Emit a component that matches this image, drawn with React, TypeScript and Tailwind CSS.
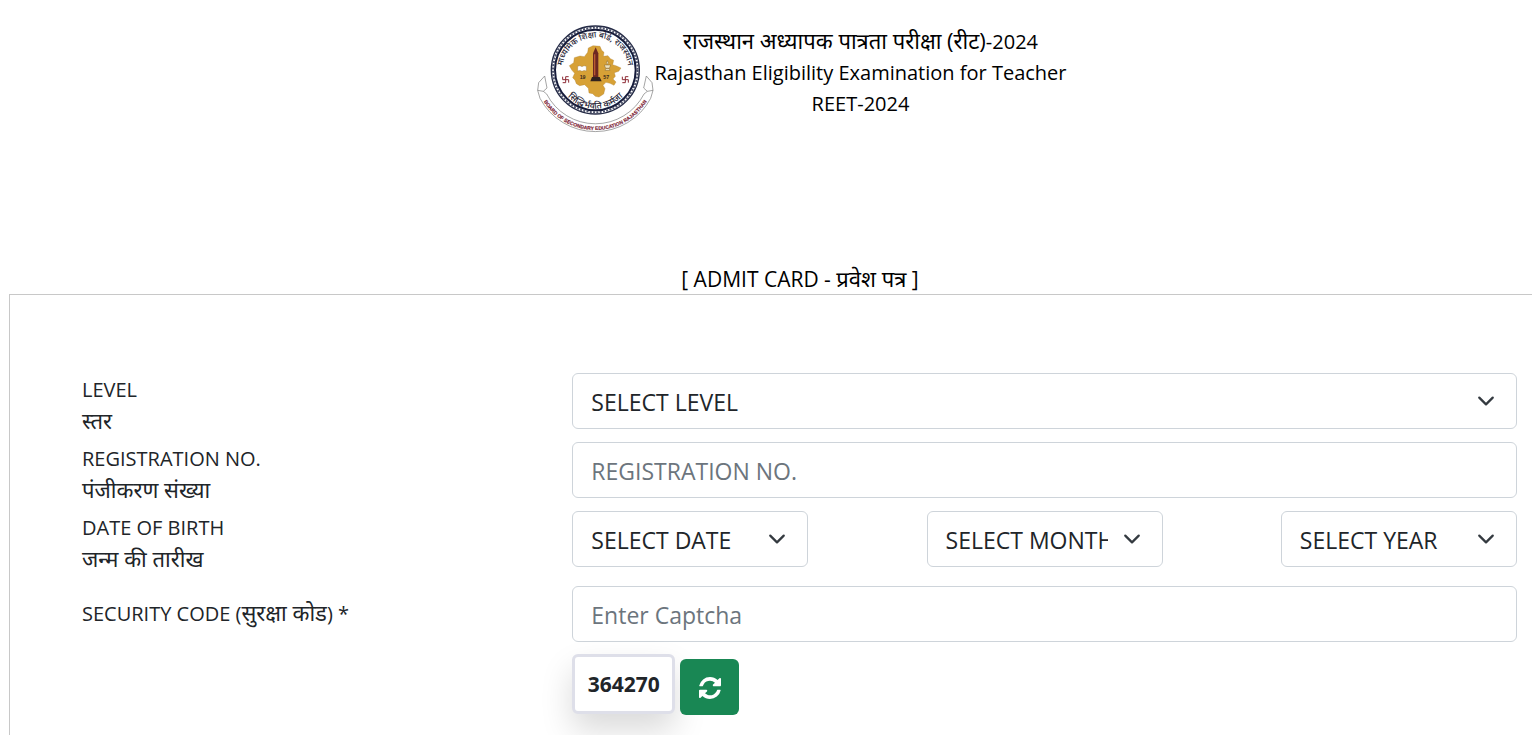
import { useState } from "react";
import type { ReactNode } from "react";

const fieldClass =
  "block h-14 w-full rounded-md border border-[#ced4da] bg-white pt-[2px] pl-[18px] text-[23px] text-[#212529] outline-none placeholder:text-[#6c757d] focus:border-[#86b7fe]";

const months = ["JANUARY", "FEBRUARY", "MARCH", "APRIL", "MAY", "JUNE", "JULY", "AUGUST", "SEPTEMBER", "OCTOBER", "NOVEMBER", "DECEMBER"];
const days = Array.from({ length: 31 }, (_, i) => String(i + 1));
const years = Array.from({ length: 50 }, (_, i) => String(2006 - i));

function Swastik({ x, y }: { x: number; y: number }) {
  return (
    <path
      transform={`translate(${x} ${y})`}
      d="M0-9V9M-9 0H9M0-9H9M9 0V9M0 9H-9M-9 0V-9"
      fill="none"
      stroke="#8e2b35"
      strokeWidth="3"
    />
  );
}

function BoardLogo() {
  return (
    <svg viewBox="12 15 351 327" className="h-[109px] w-[117px] shrink-0" role="img" aria-label="Board of Secondary Education Rajasthan">
      <defs>
        <path id="arc-top" d="M91 176A99 99 0 1 1 283 176" />
        <path id="arc-bottom" d="M78 180A112 112 0 0 0 296 180" />
        <path id="arc-ribbon" d="M31 242A182 182 0 0 0 343 242" />
      </defs>

      {/* ribbon */}
      <g fill="#fff" stroke="#777" strokeWidth="2">
        <path d="M35 168L17 188L14 211L21 235A188 188 0 0 0 353 235L360 211L357 188L340 168L332 204L343 214L333 222A164 164 0 0 1 41 222L31 214L42 204Z" />
        <path d="M14 211L31 214M360 211L343 214" fill="none" />
      </g>
      <text fontSize="15" fontWeight="700" fill="#7d2638" stroke="#7d2638" strokeWidth="0.5" textAnchor="middle" className="font-['Liberation_Sans',sans-serif]">
        <textPath href="#arc-ribbon" startOffset="50%">BOARD OF SECONDARY EDUCATION RAJASTHAN</textPath>
      </text>

      {/* rings */}
      <circle cx="187" cy="150" r="132" fill="#fff" stroke="#252b46" strokeWidth="4" />
      <circle cx="187" cy="150" r="127" fill="none" stroke="#4d536b" strokeWidth="6" strokeDasharray="6 4" />
      <circle cx="187" cy="150" r="121" fill="#fff" stroke="#161c3b" strokeWidth="6" />
      <g fill="#1d2133" fontWeight="500" textAnchor="middle" className="font-['Noto_Sans','Noto_Sans_Devanagari',sans-serif]">
        <text fontSize="25">
          <textPath href="#arc-top" startOffset="50%">माध्यमिक शिक्षा बोर्ड, राजस्थान</textPath>
        </text>
        <text fontSize="27">
          <textPath href="#arc-bottom" startOffset="50%">सिद्धिर्भवति कर्मजा</textPath>
        </text>
      </g>
      <Swastik x={98} y={179} />
      <Swastik x={277} y={179} />

      {/* state map */}
      <path
        d="M109 137L122 128L124 113L141 108L154 110L164 97L166 84L180 77L201 79L206 91L213 97L211 109L225 107L232 116L242 121L239 134L251 138L264 144L257 154L244 158L247 169L240 177L249 186L243 196L231 190L219 187L210 196L216 206L212 222L198 231L187 229L179 221L168 219L166 205L155 194L140 197L130 191L126 180L119 173L125 160L117 151Z"
        fill="#d7a136"
        stroke="#a87a2c"
        strokeWidth="1"
      />
      <path d="M180 100L188 82L196 100V172H180Z" fill="#6d2822" />
      <path d="M185 103V166" stroke="#b95b31" strokeWidth="4" />
      <path d="M177 171H200L206 184H172Z" fill="#30221f" />
      <path d="M134 139Q141 135 147 140Q153 135 160 139V153Q153 149 147 154Q141 149 134 153Z" fill="#fff" stroke="#87652f" strokeWidth="1" />
      <path d="M214 135H233L229 145H218ZM219 145H228L231 151H216ZM223 134Q218 128 223 122Q229 129 223 134Z" fill="#eee2bd" stroke="#866630" strokeWidth="1.5" />
      <g fontSize="16" fontWeight="700" fill="#3a2a1c" className="font-['Liberation_Sans',sans-serif]">
        <text x="140" y="177">19</text>
        <text x="211" y="176">57</text>
      </g>
    </svg>
  );
}

type SelectBoxProps = { id?: string; label?: string; placeholder: string; options: string[] };

function SelectBox({ id, label, placeholder, options }: SelectBoxProps) {
  return (
    <div className="relative w-full">
      <select id={id} aria-label={label} defaultValue="" className={`${fieldClass} appearance-none pr-[54px]`}>
        <option value="">{placeholder}</option>
        {options.map((o) => (
          <option key={o} value={o}>{o}</option>
        ))}
      </select>
      <svg viewBox="0 0 16 16" className="pointer-events-none absolute top-[19px] right-[22px] size-[18px]" fill="none" stroke="#343a40" strokeWidth="2" strokeLinecap="round" strokeLinejoin="round">
        <path d="m2 5 6 6 6-6" />
      </svg>
    </div>
  );
}

function FormRow({ htmlFor, label, hindi, children }: { htmlFor: string; label: string; hindi: string; children: ReactNode }) {
  return (
    <div className="grid grid-cols-[1fr_2fr] items-start gap-x-[18px]">
      <label htmlFor={htmlFor} className="block pt-[2px] leading-[30px]">
        <span className="block h-[30px]">{label}</span>
        <span className="block h-[30px] text-[22px]">{hindi}</span>
      </label>
      {children}
    </div>
  );
}

export default function App() {
  const [captcha, setCaptcha] = useState("364270");

  const refreshCaptcha = () => {
    setCaptcha(String(Math.floor(100000 + Math.random() * 900000)));
  };

  return (
    <div className="overflow-x-hidden bg-white font-['Open_Sans','Noto_Sans','Noto_Sans_Devanagari',sans-serif] text-xl text-[#212529]">
      <header className="text-black">
        <div className="flex items-start justify-center pt-[25px] pl-[72px]">
          <BoardLogo />
          <div className="text-center leading-[31px]">
            <p><span className="text-[22px]">राजस्थान अध्यापक पात्रता परीक्षा (रीट)</span>-2024</p>
            <h1>Rajasthan Eligibility Examination for Teacher</h1>
            <p>REET-2024</p>
          </div>
        </div>
        <h2 className="mt-[129px] h-[31px] pl-[68px] text-center text-[21px] leading-[31px]">
          [ ADMIT CARD - <span className="text-[22px]">प्रवेश पत्र</span> ]
        </h2>
      </header>

      <form onSubmit={(e) => e.preventDefault()} className="ml-[9px] border-t border-l border-[#c8c8c8] pt-[78px] pr-[15px] pb-10 pl-[72px]">
        <div className="space-y-[7px]">
          <FormRow htmlFor="level" label="LEVEL" hindi="स्तर">
            <SelectBox id="level" placeholder="SELECT LEVEL" options={["LEVEL 1", "LEVEL 2", "BOTH"]} />
          </FormRow>
          <FormRow htmlFor="regno" label="REGISTRATION NO." hindi="पंजीकरण संख्या">
            <input id="regno" type="text" placeholder="REGISTRATION NO." className={fieldClass} />
          </FormRow>
          <FormRow htmlFor="dob-date" label="DATE OF BIRTH" hindi="जन्म की तारीख">
            <div className="flex justify-between">
              <div className="w-1/4"><SelectBox id="dob-date" placeholder="SELECT DATE" options={days} /></div>
              <div className="w-1/4"><SelectBox label="Month of birth" placeholder="SELECT MONTH" options={months} /></div>
              <div className="w-1/4"><SelectBox label="Year of birth" placeholder="SELECT YEAR" options={years} /></div>
            </div>
          </FormRow>
        </div>

        <div className="mt-[13px] grid grid-cols-[1fr_2fr] items-start gap-x-[18px]">
          <label htmlFor="captcha" className="block pt-[11px] leading-[30px]">
            SECURITY CODE (<span className="text-[22px]">सुरक्षा कोड</span>) *
          </label>
          <div>
            <input id="captcha" type="text" placeholder="Enter Captcha" className={fieldClass} />
            <div className="mt-3 flex items-end gap-[5px]">
              <output htmlFor="captcha" className="flex h-[60px] w-[103px] items-center justify-center rounded-md border-[3px] border-[#dedfe9] bg-white pt-[2px] text-[21px] font-bold shadow-[0_16px_32px_rgba(0,0,0,0.15)]">
                {captcha}
              </output>
              <button type="button" aria-label="Refresh captcha" onClick={refreshCaptcha}
                className="relative -mb-px flex h-14 w-[59px] items-center justify-center rounded-md bg-[#198754] pt-[2px] text-white hover:bg-[#157347]">
                <svg viewBox="0 0 1536 1536" className="size-[22px]" fill="currentColor">
                  <path d="M1511 928q0 5-1 7-64 268-268 434.500t-478 166.500q-146 0-282.500-55t-243.500-157l-129 129q-19 19-45 19t-45-19-19-45v-448q0-26 19-45t45-19h448q26 0 45 19t19 45-19 45l-137 137q71 66 161 102t187 36q134 0 250-65t186-179q11-17 53-117 8-23 30-23h192q13 0 22.500 9.500t9.500 22.500zm25-800v448q0 26-19 45t-45 19h-448q-26 0-45-19t-19-45 19-45l138-138q-148-137-349-137-134 0-250 65t-186 179q-11 17-53 117-8 23-30 23h-199q-13 0-22.500-9.500t-9.500-22.500v-7q65-268 270-434.500t480-166.500q146 0 284 55.500t245 156.500l130-129q19-19 45-19t45 19 19 45z" />
                </svg>
              </button>
            </div>
          </div>
        </div>
      </form>
    </div>
  );
}
